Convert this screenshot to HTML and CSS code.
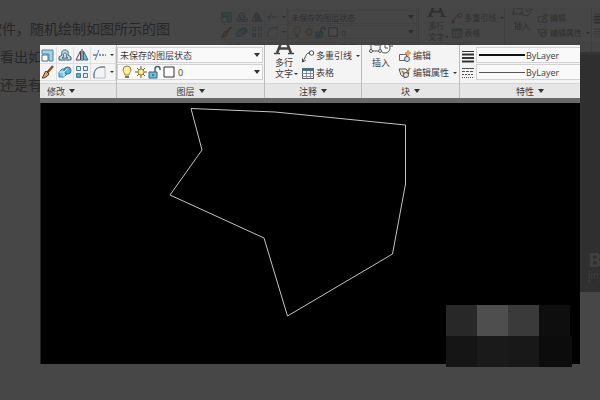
FILE: index.html
```html
<!DOCTYPE html>
<html lang="zh-CN">
<head>
<meta charset="utf-8">
<title>CAD</title>
<link rel="stylesheet" href="styles.css">
</head>
<body>
<svg class="sprite" aria-hidden="true">
  <symbol id="scale" viewBox="0 0 14 14"><path d="M1 2h11v11H8V6H1z" fill="#9fd4ea" stroke="#4b86a6"/><path d="M1 7h6v6H1z" fill="#fff" stroke="#4b6c80"/></symbol>
  <symbol id="offset" viewBox="0 0 14 14"><path d="M1 12v-3l3-2C3 3 5 2 7 2s4 1 3 5l3 2v3z" fill="#b5dcec" stroke="#3f5a6b"/><path d="M4 10l2-1.500C5 6 6 5 7 5s2 1 1 3.500L10 10z" fill="#fff" stroke="#3f5a6b"/></symbol>
  <symbol id="mirror" viewBox="0 0 14 14"><path d="M5.500 3v9H1z" fill="#eee" stroke="#445"/><path d="M8.500 3v9H13z" fill="#6db9de" stroke="#2e6c91"/><path d="M7 1v12" stroke="#333"/></symbol>
  <symbol id="trim" viewBox="0 0 14 14"><path d="M1 7h4" stroke="#333" fill="none"/><path d="M3 12L7 2" stroke="#4689ad" fill="none"/><path d="M7 7h7" stroke="#333" stroke-dasharray="2 1" fill="none"/></symbol>
  <symbol id="brush" viewBox="0 0 14 14"><path d="M12 1L6 8" stroke="#8c4a20" stroke-width="2.500"/><path d="M5 6l3 3c-2 3-4 4-7 4 2-2 2-5 4-7z" fill="#d6a765" stroke="#51341e"/></symbol>
  <symbol id="solid" viewBox="0 0 14 14"><path d="M1 7l3-3h5v5l-3 3H1z" fill="#7fc5e6" stroke="#357da4"/><circle cx="9.500" cy="5.500" r="3.500" fill="#62b0d8" stroke="#2f7196"/><path d="M1 7h5v5M6 7l3-3" stroke="#e4f5fc" fill="none"/></symbol>
  <symbol id="array" viewBox="0 0 14 14"><g fill="#d9edf6" stroke="#4c7c96"><path d="M1.500 1.500h4v4h-4zM8.500 1.500h4v4h-4zM8.500 8.500h4v4h-4z"/><path d="M1.500 8.500h4v4h-4z" fill="#5da9d0"/></g></symbol>
  <symbol id="fillet" viewBox="0 0 14 14"><path d="M2 13V10C2 5 5 2 10 2h3v11z" fill="#f2f4f5" stroke="#b5bec4"/><path d="M2 13V10C2 5 5 2 10 2h3" fill="none" stroke="#47657a"/></symbol>
  <symbol id="bulb" viewBox="0 0 14 14"><path d="M5 10C5 8 3 7 3 5a4 4 0 018 0c0 2-2 3-2 5z" fill="#fff0a0" stroke="#9c8228"/><path d="M5 11h4v2H5z" fill="#777"/></symbol>
  <symbol id="sun" viewBox="0 0 14 14"><path d="M7 1v12M1 7h12M3 3l8 8M11 3l-8 8" stroke="#6b5a2b"/><circle cx="7" cy="7" r="3" fill="#ffe98c" stroke="#a27a24"/></symbol>
  <symbol id="lock" viewBox="0 0 14 14"><path d="M7 7V4a2.500 2.500 0 015 0v1" fill="none" stroke="#356a88" stroke-width="1.500"/><path d="M1 7h8v6H1z" fill="#73bde0" stroke="#2b6688"/><path d="M5 9v2" stroke="#134"/></symbol>
  <symbol id="swatch" viewBox="0 0 14 14"><path d="M2 2h10v10H2z" fill="#fff" stroke="#333"/></symbol>
  <symbol id="bigA" viewBox="0 0 22 10"><path d="M4 8L8 -2H14L18 8M6 3.500h10" fill="none" stroke="#444" stroke-width="2.500"/><path d="M1 8.500h6M15 8.500h6" stroke="#444" stroke-width="1.500"/></symbol>
  <symbol id="insert" viewBox="0 0 24 10"><path d="M2 0v6h9M5 0h6" fill="none" stroke="#555"/><circle cx="16" cy="3" r="5" fill="#fff" stroke="#555"/><path d="M16 -1v4h3M21 1h3" stroke="#555" fill="none"/><circle cx="2" cy="6" r="1.500" fill="#fff" stroke="#555"/><circle cx="11" cy="6" r="1.500" fill="#fff" stroke="#555"/></symbol>
  <symbol id="leader" viewBox="0 0 14 14"><circle cx="10.500" cy="4" r="2.200" fill="#fff" stroke="#444"/><path d="M8 4C5 4 5 8 2 12M1.500 9.500V13l3-1.500" fill="none" stroke="#444"/></symbol>
  <symbol id="table" viewBox="0 0 14 14"><path d="M1.500 2.500h11v10h-11z" fill="#fff" stroke="#555"/><path d="M1 2h12v3H1z" fill="#4a6f87"/><path d="M1 7.500h12M1 10.500h12M5.500 5v8M9.500 5v8" stroke="#889" fill="none"/></symbol>
  <symbol id="edit" viewBox="0 0 14 14"><path d="M1.500 5.500h7v6h-7z" fill="#f4f4f4" stroke="#666"/><circle cx="9" cy="10" r="2.500" fill="#d7e8f0" stroke="#555"/><path d="M10 1l1 2 2 1-2 1-1 2-1-2-2-1 2-1z" fill="#f4a13a" stroke="#c97a18" stroke-width=".5"/></symbol>
  <symbol id="attr" viewBox="0 0 14 14"><path d="M1 3h7l3 4-4 5-4-3z" fill="#eee" stroke="#555"/><path d="M4 5l3 4 5-7" fill="none" stroke="#b36f24" stroke-width="1.500"/><circle cx="8" cy="9" r="2.500" fill="#d7e8f0" stroke="#555"/></symbol>
  <symbol id="weight" viewBox="0 0 14 14"><path d="M1 2.500h12" stroke="#333"/><path d="M1 5.500h12" stroke="#333" stroke-width="2"/><path d="M1 9h12" stroke="#333" stroke-width="2"/><path d="M1 12.500h12" stroke="#333" stroke-width="2"/></symbol>
  <symbol id="dash" viewBox="0 0 14 14"><g stroke="#555"><path d="M1 2.500h12"/><path d="M1 5.500h12" stroke-dasharray="3 1"/><path d="M1 8.500h12" stroke-dasharray="2 1"/><path d="M1 11.500h12" stroke-dasharray="1 1"/></g></symbol>
</svg>

<div class="page">
  <article class="article">
    <p class="first">软件，随机绘制如图所示的图</p>
    <p>看出如</p>
    <p>还是有</p>
  </article>
  <div class="figure" aria-hidden="true" inert>
    <div class="figure-ribbon"></div>
    <div class="figure-canvas"><div class="mark"><b>Bai</b><span>jingyan</span></div></div>
  </div>
</div>
<div class="shade"></div>

<main class="lightbox">
  <div class="ribbon">
    <section class="panel modify">
      <div class="tools">
        <button aria-label="缩放"><svg class="icon"><use href="#scale"/></svg></button>
        <button aria-label="偏移"><svg class="icon"><use href="#offset"/></svg></button>
        <button aria-label="镜像"><svg class="icon"><use href="#mirror"/></svg></button>
        <button aria-label="修剪"><svg class="icon"><use href="#trim"/></svg><i class="arrow small"></i></button>
        <button aria-label="特性匹配"><svg class="icon"><use href="#brush"/></svg></button>
        <button aria-label="实体"><svg class="icon"><use href="#solid"/></svg></button>
        <button aria-label="阵列"><svg class="icon"><use href="#array"/></svg></button>
        <button aria-label="圆角"><svg class="icon"><use href="#fillet"/></svg><i class="arrow small"></i></button>
      </div>
      <h2>修改<i class="arrow"></i></h2>
    </section>
    <section class="panel layers">
      <div class="stack">
        <div class="field"><select aria-label="图层状态"><option>未保存的图层状态</option></select><i class="arrow"></i></div>
        <div class="field layer"><span class="marks"><svg class="icon"><use href="#bulb"/></svg><svg class="icon"><use href="#sun"/></svg><svg class="icon"><use href="#lock"/></svg><svg class="icon"><use href="#swatch"/></svg></span><select aria-label="图层"><option>0</option></select><i class="arrow"></i></div>
      </div>
      <h2>图层<i class="arrow"></i></h2>
    </section>
    <section class="panel notes">
      <div class="split">
        <button class="big"><svg class="wide"><use href="#bigA"/></svg><span>多行</span><span>文字<i class="arrow small"></i></span></button>
        <div class="stack">
          <button class="item"><svg class="icon"><use href="#leader"/></svg>多重引线<i class="arrow small"></i></button>
          <button class="item"><svg class="icon"><use href="#table"/></svg>表格</button>
        </div>
      </div>
      <h2>注释<i class="arrow"></i></h2>
    </section>
    <section class="panel blocks">
      <div class="split">
        <button class="big"><svg class="wide"><use href="#insert"/></svg><span>插入</span></button>
        <div class="stack">
          <button class="item"><svg class="icon"><use href="#edit"/></svg>编辑</button>
          <button class="item"><svg class="icon"><use href="#attr"/></svg>编辑属性<i class="arrow small"></i></button>
        </div>
      </div>
      <h2>块<i class="arrow"></i></h2>
    </section>
    <section class="panel props">
      <div class="stack">
        <div class="prop"><svg class="icon"><use href="#weight"/></svg><div class="field"><span class="rule thick"></span><select aria-label="线宽"><option>ByLayer</option></select></div></div>
        <div class="prop"><svg class="icon"><use href="#dash"/></svg><div class="field"><span class="rule"></span><select aria-label="线型"><option>ByLayer</option></select></div></div>
      </div>
      <h2>特性<i class="arrow"></i></h2>
    </section>
  </div>
  <div class="canvas">
    <svg viewBox="0 0 540 261" preserveAspectRatio="xMinYMin meet" role="img" aria-label="多边形"><polygon points="151,5.500 235,9 365.500,22 365.500,81 352.500,151 247.500,213 224,135 130,92 162,47"/></svg>
  </div>
  <div class="mosaic"><i class="m1"></i><i class="m2"></i><i class="m3"></i><i class="m4"></i><i class="m5"></i><i class="m6"></i><i class="m7"></i><i class="m8"></i></div>
</main>
<script src="script.js"></script>
</body>
</html>
```
FILE: styles.css
```css
* { box-sizing: border-box; }
body {
  margin: 0;
  height: 100vh;
  overflow: hidden;
  position: relative;
  background: #fff;
  font-family: "Open Sans", "Noto Sans CJK SC", sans-serif;
}
.sprite { position: absolute; width: 0; height: 0; }

/* Article under the lightbox */
.page { display: flex; padding-top: 8px; overflow: hidden; }
.article {
  flex: 0 0 220px;
  padding-top: 7px;
  font-size: 14px;
  line-height: 28px;
  color: #8c8c8c;
  white-space: nowrap;
}
.article p { margin: 0; }
.article .first { text-indent: -12px; }
.figure { flex: 0 0 478px; }
.figure-ribbon { opacity: .45; }
.figure-canvas {
  height: 237px;
  background: #a9a9a9;
  padding: 196px 0 0 368px;
  color: #e2e2e2;
}
.mark { display: flex; flex-direction: column; }
.mark b { font-size: 20px; line-height: 18px; }
.mark span { font-size: 10px; line-height: 12px; }
.shade { position: absolute; inset: 0; background: rgba(0, 0, 0, .72); }

/* Lightbox */
.lightbox {
  position: absolute;
  inset: 45px 20px 36px 40px;
  display: flex;
  flex-direction: column;
  background: #000;
}

/* Ribbon */
.ribbon {
  --row: 17px;
  --icon: 14px;
  --text: 9px;
  --title: 15px;
  --wide: 24px;
  --line: 46px;
  --big: 32px;
  display: grid;
  grid-template-columns: 77fr 148fr 97fr 98fr 120fr;
  background: #f4f4f4;
  border-bottom: 5px solid #696969;
  font-size: var(--text);
  color: #3c3c3c;
}
.ribbon.compact {
  --row: 15px;
  --icon: 12px;
  --text: 8px;
  --title: 10px;
  --wide: 21px;
  --line: 41px;
  --big: 28px;
  border-bottom-width: 3px;
}
.panel {
  min-width: 0;
  overflow: hidden;
  padding-top: 2px;
  border-right: 1px solid #bcbcbc;
}
.panel:last-child { border-right: 0; }
.panel h2 {
  margin: 2px 0 0;
  height: var(--title);
  display: flex;
  align-items: center;
  justify-content: center;
  gap: 4px;
  background: #e6e6e6;
  border-top: 1px solid #d4d4d4;
  font-size: var(--text);
  font-weight: 400;
}
.modify h2 { justify-content: flex-start; padding-left: 7px; }
.props h2 { padding-left: 20px; }
button, select {
  margin: 0;
  padding: 0;
  border: 0;
  background: none;
  color: inherit;
  font: inherit;
}
.icon { width: var(--icon); height: var(--icon); flex: none; }
.arrow {
  flex: none;
  border: 3px solid transparent;
  border-top: 4px solid #333;
  border-bottom: 0;
}
.arrow.small { border-width: 2px 2px 0; }
.tools {
  display: grid;
  grid-template-columns: 17fr 17fr 17fr 25fr;
  grid-auto-rows: var(--row);
}
.tools button {
  display: flex;
  align-items: center;
  justify-content: center;
  gap: 4px;
  border: 1px solid #dedede;
  border-width: 0 1px 1px 0;
}
.stack {
  flex: 1;
  min-width: 0;
  display: grid;
  grid-auto-rows: var(--row);
}
.field {
  flex: 1;
  min-width: 0;
  position: relative;
  display: flex;
  align-items: center;
  margin: 0 1px 1px 0;
  padding: 0 2px;
  border: 1px solid #d2d2d2;
  background: #f9f9f9;
}
.field select { flex: 1; min-width: 0; appearance: none; outline: 0; }
.marks { display: flex; padding-right: 2px; }
.rule { flex: none; width: var(--line); height: 1px; margin-right: 1px; background: #555; }
.rule.thick { height: 2px; background: #111; }
.split { display: flex; height: calc(2 * var(--row)); }
.big {
  flex: none;
  width: var(--big);
  margin: -2px 1px 0 3px;
  display: flex;
  flex-direction: column;
  align-items: center;
  line-height: 11px;
}
.big span { display: flex; align-items: center; gap: 1px; }
.big span .arrow { margin-right: -5px; }
.wide { width: var(--wide); height: 10px; flex: none; margin-bottom: 2px; }
.item {
  display: flex;
  align-items: center;
  gap: 1px;
  white-space: nowrap;
}
.item .arrow { margin-left: 3px; }
.prop { display: flex; align-items: center; gap: 1px; padding-left: 1px; }
.prop .field { align-self: stretch; margin-right: 0; border-right: 0; }

/* Drawing area */
.canvas { flex: 1; min-height: 0; box-shadow: inset 1px 0 #222; }
.canvas svg { display: block; width: 100%; height: 100%; }
.canvas polygon { fill: none; stroke: #c4c4c4; stroke-width: 1; }

.mosaic {
  position: absolute;
  right: 8px;
  bottom: -3px;
  display: grid;
  grid-template-columns: 31px 31px 31px 33px;
  grid-auto-rows: 31px;
}
.m1 { background: #282828; }
.m2 { background: #4e4e4e; }
.m3 { background: #3a3a3a; }
.m4 { background: #0e0e0e; margin-right: 2px; }
.m5 { background: #151515; }
.m6 { background: #1a1a1a; }
.m7 { background: #181818; }
.m8 { background: #0c0c0c; }
```
FILE: script.js
```js
// The article's thumbnail shows the same ribbon at a smaller size.
const copy = document.querySelector(".lightbox .ribbon").cloneNode(true);
copy.classList.add("compact");
document.querySelector(".figure-ribbon").append(copy);
```
